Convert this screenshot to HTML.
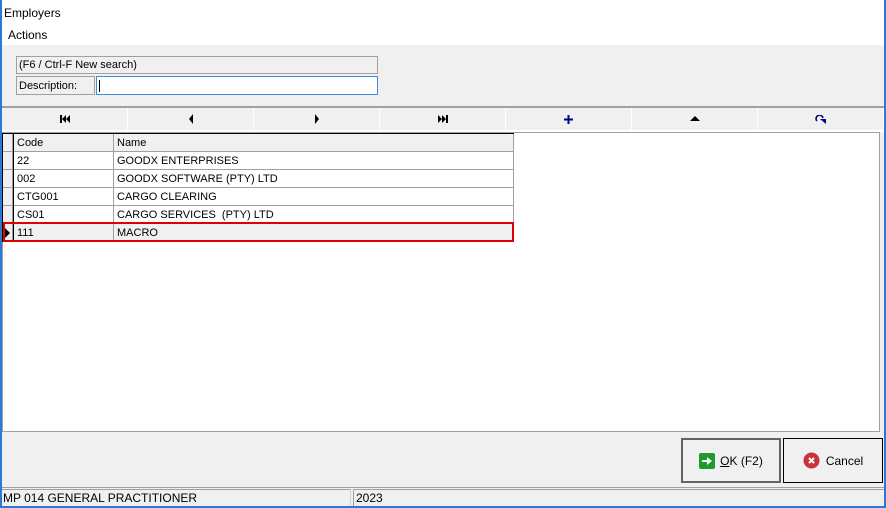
<!DOCTYPE html>
<html><head><style>
*{margin:0;padding:0;box-sizing:border-box}
body{width:886px;height:508px;position:relative;overflow:hidden;background:#f0f0f0;font-family:"Liberation Sans",sans-serif;font-size:11px;color:#000}
.a{position:absolute}
.nb{position:absolute;top:108px;height:22px;width:125px;background:#f0f0f0;display:flex;align-items:center;justify-content:center}
.cell{position:absolute;height:18px;line-height:19px;padding-left:3px;border-right:1px solid #a0a0a0;border-bottom:1px solid #a0a0a0;white-space:nowrap}
</style></head><body>
<div class="a" style="left:0;top:0;width:886px;height:45px;background:#fff"></div>
<div class="a" style="left:4px;top:6px;font-size:12px">Employers</div>
<div class="a" style="left:8px;top:28px;font-size:12px">Actions</div>
<div class="a" style="left:0;top:0;width:2px;height:508px;background:#2b79d0"></div>
<div class="a" style="left:884px;top:0;width:2px;height:508px;background:#2b79d0"></div>
<div class="a" style="left:0;top:506px;width:886px;height:2px;background:#2b79d0"></div>

<div class="a" style="left:16px;top:56px;width:362px;height:18px;border:1px solid #a0a0a0;padding-left:2px;line-height:17px">(F6 / Ctrl-F New search)</div>
<div class="a" style="left:16px;top:76px;width:79px;height:19px;border:1px solid #a0a0a0;padding-left:2px;line-height:18px">Description:</div>
<div class="a" style="left:96px;top:76px;width:282px;height:19px;border:1px solid #3d8ee0;background:#fff"><div class="a" style="left:2px;top:3px;width:1px;height:12px;background:#000"></div></div>

<div class="a" style="left:2px;top:106px;width:882px;height:26px;border-top:2px solid #a0a0a0;background:#fff"></div>
<div class="nb" style="left:2px"><svg width="12" height="10"><rect x="1" y="1" width="2" height="8"/><path d="M7 1v8L3 5zM11 1v8L7 5z"/></svg></div>
<div class="nb" style="left:128px"><svg width="6" height="10"><path d="M5 0v10L1 5z"/></svg></div>
<div class="nb" style="left:254px"><svg width="6" height="10"><path d="M1 0v10L5 5z"/></svg></div>
<div class="nb" style="left:380px"><svg width="12" height="10"><path d="M1 1v8L5 5zM5 1v8L9 5z"/><rect x="9" y="1" width="2" height="8"/></svg></div>
<div class="nb" style="left:506px"><svg width="9" height="9"><path d="M3.5 0h2v3.5H9v2H5.5V9h-2V5.5H0v-2h3.5z" fill="#00008b"/></svg></div>
<div class="nb" style="left:632px"><svg width="10" height="6"><path d="M0 5L5 0l5 5z"/></svg></div>
<div class="nb" style="left:758px"><svg width="12" height="9"><path d="M8 3A3.5 3.5 0 1 0 2 6" stroke="#00008b" stroke-width="1.6" fill="none"/><path d="M5 4h6v5z" fill="#00008b"/></svg></div>

<div class="a" style="left:2px;top:132px;width:878px;height:300px;background:#fff;border:1px solid #a0a0a0"></div>
<div class="a" style="left:2px;top:133px;width:512px;height:1px;background:#000"></div>
<div class="a" style="left:2px;top:133px;width:1px;height:109px;background:#000"></div>
<div class="a" style="left:13px;top:133px;width:1px;height:109px;background:#000"></div>

<div class="cell" style="left:3px;top:134px;width:10px;background:#f0f0f0"></div>
<div class="cell" style="left:14px;top:134px;width:100px;background:#f0f0f0">Code</div>
<div class="cell" style="left:114px;top:134px;width:400px;background:#f0f0f0">Name</div>

<div class="cell" style="left:3px;top:152px;width:10px;background:#f0f0f0"></div>
<div class="cell" style="left:14px;top:152px;width:100px">22</div>
<div class="cell" style="left:114px;top:152px;width:400px">GOODX ENTERPRISES</div>
<div class="cell" style="left:3px;top:170px;width:10px;background:#f0f0f0"></div>
<div class="cell" style="left:14px;top:170px;width:100px">002</div>
<div class="cell" style="left:114px;top:170px;width:400px">GOODX SOFTWARE (PTY) LTD</div>
<div class="cell" style="left:3px;top:188px;width:10px;background:#f0f0f0"></div>
<div class="cell" style="left:14px;top:188px;width:100px">CTG001</div>
<div class="cell" style="left:114px;top:188px;width:400px">CARGO CLEARING</div>
<div class="cell" style="left:3px;top:206px;width:10px;background:#f0f0f0"></div>
<div class="cell" style="left:14px;top:206px;width:100px">CS01</div>
<div class="cell" style="left:114px;top:206px;width:400px">CARGO SERVICES &nbsp;(PTY) LTD</div>
<div class="cell" style="left:3px;top:224px;width:10px;background:#f0f0f0"></div>
<div class="cell" style="left:14px;top:224px;width:100px;background:#f0f0f0">111</div>
<div class="cell" style="left:114px;top:224px;width:400px;background:#f0f0f0">MACRO</div>
<svg class="a" style="left:5px;top:228px" width="5" height="10"><path d="M0 0v10l5-5z"/></svg>
<div class="a" style="left:3px;top:222px;width:511px;height:20px;border:2px solid #e00000"></div>

<div class="a" style="left:681px;top:438px;width:100px;height:45px;border:2px solid #646464;display:flex;align-items:center;justify-content:center;font-size:12px">
<svg width="16" height="16" style="margin-right:5px"><rect width="16" height="16" rx="2" fill="#1f9a2e"/><path d="M3 7h5V4l5 4-5 4V9H3z" fill="#fff"/></svg><u>O</u>K (F2)</div>
<div class="a" style="left:783px;top:438px;width:100px;height:45px;border:1px solid #000;display:flex;align-items:center;justify-content:center;font-size:12px">
<svg width="17" height="17" style="margin-right:6px"><circle cx="8.5" cy="8.5" r="8" fill="#c9343a"/><path d="M6 6l5 5M11 6l-5 5" stroke="#fff" stroke-width="2"/></svg>Cancel</div>

<div class="a" style="left:2px;top:487px;width:882px;height:1px;background:#a0a0a0"></div>
<div class="a" style="left:2px;top:489px;width:349px;height:17px;border-top:1px solid #a0a0a0;border-right:1px solid #d0d0d0;padding-left:1px;font-size:12px;line-height:17px">MP 014 GENERAL PRACTITIONER</div>
<div class="a" style="left:353px;top:489px;width:531px;height:17px;border-top:1px solid #a0a0a0;border-left:1px solid #a0a0a0;padding-left:2px;font-size:12px;line-height:17px">2023</div>
</body></html>
